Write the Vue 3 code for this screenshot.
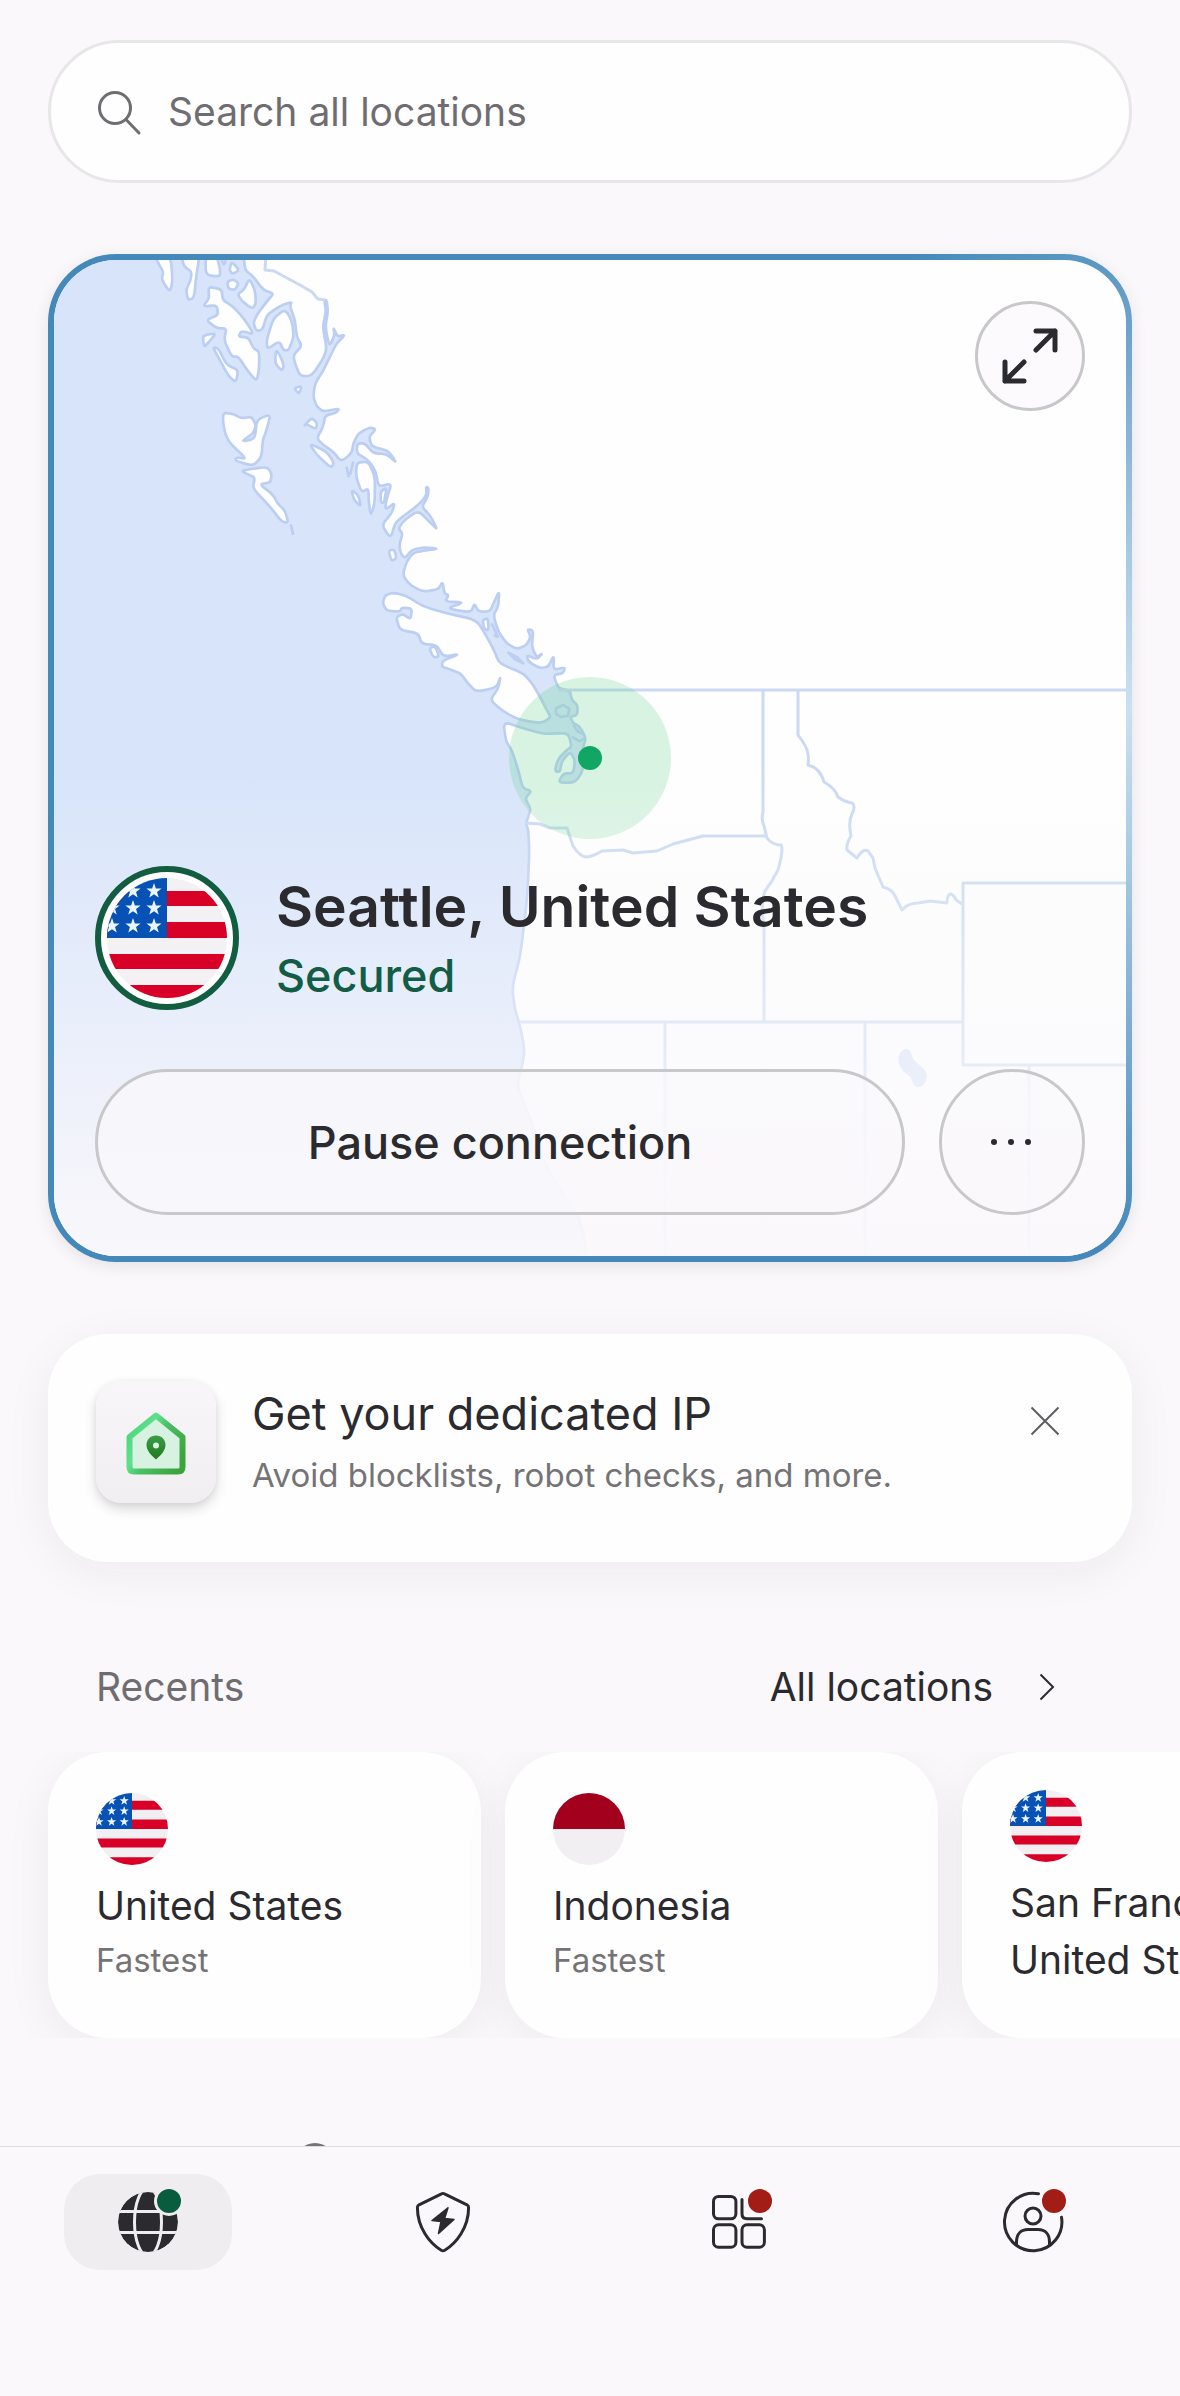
<template>
  <div class="screen">
    <main class="content">
      <label class="search">
        <svg class="search-icon" viewBox="0 0 48 48" aria-hidden="true">
          <circle cx="20" cy="20" r="15.5" />
          <path d="M31 31.5L44 45" />
        </svg>
        <input v-model="query" type="text" placeholder="Search all locations" aria-label="Search all locations" />
      </label>

      <section class="map-card">
        <div class="map-inner">
          <svg class="map" viewBox="54 260 1072 996" preserveAspectRatio="xMidYMid slice" aria-hidden="true">
            <defs>
              <linearGradient id="fade" x1="0" y1="0" x2="0" y2="1">
                <stop offset="0" stop-color="#faf8fb" stop-opacity="0" />
                <stop offset="0.5" stop-color="#faf8fb" stop-opacity="0.5" />
                <stop offset="0.8" stop-color="#faf8fb" stop-opacity="0.8" />
                <stop offset="1" stop-color="#faf8fb" stop-opacity="0.96" />
              </linearGradient>
            </defs>
            <rect x="54" y="260" width="1072" height="996" fill="#fefefe" />
            <g transform="translate(40 240) scale(0.33333)" stroke-width="8" stroke-linejoin="round">
              <path class="water" :d="coast" />
              <path v-for="(d, i) in islands" :key="i" class="land" :d="d" />
              <path class="water" d="M1405 1238L1432 1252L1450 1270L1425 1258Z" />
              <path class="water" d="M1548 1405l22 -10l18 12l-4 20l-22 4l-14 -10Z" />
              <path class="water" d="M1600 1455l12 18l20 10M1596 1490l22 14l14 -8" />
              <path class="water" d="M752 853l8 32M920 680l6 32M940 665l-10 40M1355 1150l18 40l-12 -4" />
            </g>
            <g class="borders">
              <path v-for="(d, i) in borders" :key="i" :d="d" />
            </g>
            <path class="lake" d="M899 1055C903 1046 911 1048 912 1056C914 1064 927 1067 927 1076C926 1084 920 1090 915 1086C911 1082 913 1078 908 1075C901 1070 897 1063 899 1055Z" />
            <circle cx="590" cy="758" r="81" fill="#5fcf8b" fill-opacity="0.24" />
            <circle cx="590" cy="758" r="12" fill="#12a665" />
            <rect x="54" y="770" width="1072" height="486" fill="url(#fade)" />
          </svg>

          <div class="overlay">
            <button class="round expand" type="button" aria-label="Expand map">
              <svg viewBox="0 0 110 110" aria-hidden="true">
                <path d="M61 49L80 30M61 30H80V49M49 61L30 80M30 61V80H49" />
              </svg>
            </button>

            <div class="status">
              <div class="location">
                <div class="flag-ring">
                  <svg viewBox="0 0 120 120" aria-hidden="true">
                    <clipPath id="clip-main"><circle cx="60" cy="60" r="60" /></clipPath>
                    <g clip-path="url(#clip-main)">
                      <rect width="120" height="120" fill="#f3f1f4" />
                      <path :d="stripes" fill="#d80027" />
                      <rect width="60" height="60" fill="#0752b4" />
                      <path v-for="(s, i) in stars" :key="i" :d="s" fill="#eaf6ff" />
                    </g>
                  </svg>
                </div>
                <div>
                  <h1>Seattle, United States</h1>
                  <p class="secured">Secured</p>
                </div>
              </div>
              <div class="actions">
                <button class="pause" type="button">Pause connection</button>
                <button class="round more" type="button" aria-label="More options">
                  <svg viewBox="0 0 146 146" aria-hidden="true">
                    <circle cx="55" cy="73" r="3" />
                    <circle cx="72" cy="73" r="3" />
                    <circle cx="89" cy="73" r="3" />
                  </svg>
                </button>
              </div>
            </div>
          </div>
        </div>
      </section>

      <section v-if="showPromo" class="promo">
        <div class="promo-icon">
          <svg viewBox="0 0 64 64" aria-hidden="true">
            <defs>
              <linearGradient id="house" x1="0" y1="0.2" x2="1" y2="0.8">
                <stop offset="0" stop-color="#4fd67f" />
                <stop offset="0.3" stop-color="#5fe08c" />
                <stop offset="0.5" stop-color="#4bbf68" />
                <stop offset="1" stop-color="#3ca43c" />
              </linearGradient>
              <linearGradient id="pin" x1="0" y1="0" x2="0" y2="1">
                <stop offset="0" stop-color="#3b9c49" />
                <stop offset="1" stop-color="#1f7a1c" />
              </linearGradient>
            </defs>
            <path d="M32 4.5L58.5 26V56Q58.5 60.5 54 60.5H10Q5.5 60.5 5.5 56V26Z" fill="#d8f2e2" stroke="url(#house)" stroke-width="6" stroke-linejoin="round" />
            <path d="M32 24.5C26.5 24.5 22.5 28.5 22.5 34C22.5 40 28 45 32 48.5C36 45 41.5 40 41.5 34C41.5 28.5 37.5 24.5 32 24.5ZM32 37.5A3 3 0 1 1 32 31.5A3 3 0 1 1 32 37.5Z" fill="url(#pin)" />
          </svg>
        </div>
        <div class="promo-text">
          <h2>Get your dedicated IP</h2>
          <p>Avoid blocklists, robot checks, and more.</p>
        </div>
        <button class="close" type="button" aria-label="Close" @click="showPromo = false">
          <svg viewBox="0 0 30 30" aria-hidden="true"><path d="M1.5 1.5L28.5 28.5M28.5 1.5L1.5 28.5" /></svg>
        </button>
      </section>

      <div class="recents-head">
        <h3>Recents</h3>
        <a href="#">
          All locations
          <svg viewBox="0 0 16 28" aria-hidden="true"><path d="M1.5 1.5L14 14L1.5 26.5" /></svg>
        </a>
      </div>

      <div class="recents">
        <button v-for="(item, i) in recents" :key="item.title" class="recent" type="button">
          <svg viewBox="0 0 120 120" aria-hidden="true">
            <clipPath :id="'clip-' + i"><circle cx="60" cy="60" r="60" /></clipPath>
            <g :clip-path="'url(#clip-' + i + ')'">
              <rect width="120" height="120" fill="#f1eff2" />
              <template v-if="item.flag === 'us'">
                <path :d="stripes" fill="#d80027" />
                <rect width="60" height="60" fill="#0752b4" />
                <path v-for="(s, n) in stars" :key="n" :d="s" fill="#eaf6ff" />
              </template>
              <rect v-else width="120" height="60" fill="#a2001d" />
            </g>
          </svg>
          <span class="recent-title">{{ item.title }}</span>
          <span :class="item.plain ? 'recent-title' : 'recent-sub'">{{ item.sub }}</span>
        </button>
      </div>

      <div class="next"></div>
    </main>

    <nav class="tabs">
      <a href="#" class="tab active" aria-label="VPN">
        <svg viewBox="0 0 72 72" aria-hidden="true">
          <clipPath id="clip-globe"><circle cx="36" cy="36" r="30" /></clipPath>
          <g clip-path="url(#clip-globe)">
            <circle cx="36" cy="36" r="30" fill="#2b2a2f" />
            <path d="M4 25.5H68M4 46.5H68" stroke="#efedf0" stroke-width="3" />
            <ellipse cx="36" cy="36" rx="13.5" ry="34" fill="none" stroke="#efedf0" stroke-width="3" />
          </g>
          <circle cx="57" cy="15" r="15" fill="#efedf0" />
          <circle cx="57" cy="15" r="12" fill="#0a5c3f" />
        </svg>
      </a>
      <a href="#" class="tab" aria-label="Threat protection">
        <svg viewBox="0 0 72 72" aria-hidden="true">
          <path class="line" d="M34.5 7.8Q36 7 37.5 7.8L60 18.8Q61.6 19.7 61.6 21.5C61.6 42 49 57.5 37.8 64.2Q36 65.2 34.2 64.2C23 57.5 10.4 42 10.4 21.5Q10.4 19.7 12 18.8Z" />
          <path d="M41 21.8L37.6 32.6L47 33.4L31.5 47.4L34 35.6L25 34.6Z" fill="#2b2a2f" stroke="#2b2a2f" stroke-width="1.5" stroke-linejoin="round" />
        </svg>
      </a>
      <a href="#" class="tab" aria-label="Products">
        <svg viewBox="0 0 72 72" aria-hidden="true">
          <rect class="line" x="11.5" y="10.4" width="22.4" height="22.4" rx="5" />
          <rect class="line" x="11.5" y="38.8" width="22.4" height="22.4" rx="5" />
          <rect class="line" x="40" y="38.8" width="22.4" height="22.4" rx="5" />
          <path class="line" d="M40 13.5V27.8Q40 32.8 45 32.8H59.5" />
          <circle cx="58" cy="15" r="12" fill="#a11d16" />
        </svg>
      </a>
      <a href="#" class="tab" aria-label="Profile">
        <svg viewBox="0 0 72 72" aria-hidden="true">
          <path class="line" d="M41.5 7.8A28.7 28.7 0 1 0 64.5 31.3" />
          <circle class="line" cx="36" cy="30" r="8" />
          <path class="line" d="M19.5 58V56C19.5 48 24 43.5 31 43.5H41C48 43.5 52.5 48 52.5 56V58" />
          <circle cx="57" cy="15" r="12" fill="#a11d16" />
        </svg>
      </a>
    </nav>
  </div>
</template>

<script setup>
import { ref } from "vue";

const query = ref("");
const showPromo = ref(true);

const recents = [
  { flag: "us", title: "United States", sub: "Fastest" },
  { flag: "id", title: "Indonesia", sub: "Fastest" },
  { flag: "us", title: "San Francisco,", sub: "United States", plain: true },
];

const stripes = "M0 13H120V28H0ZM0 44H120V60H0ZM0 76H120V91H0ZM0 107H120V120H0Z";

const star = (cx, cy, r) => {
  const points = [];
  for (let i = 0; i < 10; i++) {
    const radius = i % 2 ? r * 0.4 : r;
    const angle = (Math.PI / 5) * i - Math.PI / 2;
    points.push(`${(cx + radius * Math.cos(angle)).toFixed(2)} ${(cy + radius * Math.sin(angle)).toFixed(2)}`);
  }
  return `M${points.join("L")}Z`;
};

const stars = [];
for (const y of [13, 30, 48]) {
  for (const x of [5, 26, 47]) {
    stars.push(star(x, y, 8));
  }
}

// closed outline with softened corners
const smooth = (text) => {
  const pts = text.split(" ").map((p) => p.split(",").map(Number));
  const mid = (a, b) => [(a[0] + b[0]) / 2, (a[1] + b[1]) / 2];
  const near = (a, b) => [a[0] * 0.65 + b[0] * 0.35, a[1] * 0.65 + b[1] * 0.35];
  const start = mid(pts[pts.length - 1], pts[0]);
  let d = `M${start.join(" ")}`;
  pts.forEach((p, i) => {
    const prev = pts[(i + pts.length - 1) % pts.length];
    const next = pts[(i + 1) % pts.length];
    d += `L${near(p, prev).join(" ")}Q${p.join(" ")} ${near(p, next).join(" ")}`;
  });
  return d + "Z";
};

const coast = smooth(
  "-200,-200 0,0 400,20 600,20 612,50 615,90 640,110 670,150 702,160 680,185 650,225 640,250 650,274 668,268 680,225 720,198 755,185 750,200 765,240 770,290 786,318 760,345 765,370 780,408 815,408 850,355 860,325 848,260 858,215 853,180 860,180 864,215 856,260 868,320 884,285 880,262 892,290 916,284 890,310 870,350 848,395 825,430 820,470 830,500 850,515 898,505 890,518 855,527 850,560 830,595 850,615 880,635 903,665 935,640 940,610 955,580 990,562 1008,568 987,590 995,620 1045,632 1071,670 1040,642 1000,640 975,610 952,610 950,640 985,660 1008,695 1015,740 1055,730 1040,775 1035,810 1065,788 1055,820 1025,855 1052,895 1065,850 1085,832 1135,795 1160,765 1158,740 1166,745 1164,770 1145,800 1170,825 1193,870 1168,845 1135,812 1095,838 1075,865 1088,880 1078,915 1082,940 1095,955 1115,930 1150,922 1197,926 1150,932 1120,938 1100,965 1088,1005 1110,1035 1150,1055 1195,1048 1208,1025 1213,1060 1226,1065 1215,1085 1273,1087 1220,1105 1293,1118 1303,1090 1315,1115 1350,1115 1365,1080 1378,1053 1375,1100 1360,1125 1375,1175 1400,1210 1430,1228 1460,1215 1472,1190 1462,1167 1480,1172 1475,1220 1490,1252 1508,1240 1490,1258 1460,1245 1465,1265 1500,1285 1525,1280 1542,1245 1540,1290 1575,1282 1570,1300 1540,1305 1555,1345 1590,1352 1595,1380 1613,1395 1612,1425 1590,1430 1600,1450 1620,1460 1638,1495 1628,1525 1630,1590 1605,1628 1555,1628 1570,1600 1600,1600 1605,1560 1590,1535 1565,1565 1560,1595 1545,1595 1552,1560 1580,1530 1595,1520 1585,1480 1540,1480 1510,1482 1450,1465 1390,1445 1398,1505 1415,1530 1435,1590 1448,1645 1475,1653 1455,1675 1472,1705 1465,1730 1458,1750 1465,1770 1468,1840 1462,1970 1441,2150 1416,2240 1425,2310 1441,2360 1454,2430 1446,2480 1430,2540 1473,2640 1500,2740 1553,2840 1629,2950 1650,3150 0,3150 -200,3400"
);

const islands = [
  "345,50 358,75 370,95 365,120 390,157 398,120 392,50",
  "425,50 432,80 455,95 452,120 438,150 444,180 462,174 470,100 478,50",
  "497,50 497,105 540,110 540,85 530,50",
  "542,50 552,78 560,50",
  "575,65 568,90 578,102 598,90",
  "562,125 580,118 596,130 585,150 565,146",
  "628,115 612,150 593,162 605,182 637,207 648,190 645,150",
  "505,140 545,148 548,180 580,200 615,240 642,284 605,272 595,290 625,292 640,325 658,335 657,390 650,424 625,395 595,350 575,350 552,300 560,265 530,265 498,240 535,225 530,195 488,200 508,175",
  "488,286 528,280 510,302 492,322",
  "518,322 535,325 560,375 595,390 588,427 565,408 540,360",
  "735,208 755,240 762,290 745,332 730,330 718,303 682,328 680,300 700,235",
  "708,328 722,350 732,378 725,392 705,370",
  "762,445 785,438 778,462",
  "550,518 580,522 605,535 635,530 648,555 640,580 603,605 645,597 650,540 692,522 680,570 668,600 665,650 640,678 585,662 590,652 620,657 570,610 555,580 549,545",
  "603,692 680,680 695,700 692,728 658,732 700,765 712,790 735,812 745,848 725,845 690,800 638,745 645,712 622,702",
  "792,558 815,533 832,550 827,568 800,552",
  "808,610 860,635 882,668 874,684 830,645",
  "950,668 985,665 1005,710 1004,790 992,828 986,780 985,745 965,757 948,710",
  "934,750 955,765 963,800 942,780",
  "1022,755 1040,742 1032,790 1022,787",
  "1046,932 1062,928 1070,955 1054,963",
  "1028,1090 1035,1066 1060,1058 1100,1068 1150,1100 1220,1120 1310,1140 1340,1190 1362,1230 1375,1265 1400,1280 1450,1300 1480,1335 1505,1380 1520,1410 1533,1432 1505,1450 1440,1440 1390,1415 1350,1380 1375,1345 1382,1308 1370,1342 1308,1356 1280,1325 1262,1300 1235,1290 1205,1280 1208,1262 1260,1242 1210,1250 1190,1215 1145,1212 1135,1180 1080,1170 1068,1132 1088,1122 1112,1138 1116,1105 1085,1103 1080,1115 1040,1112",
  "1168,1225 1185,1218 1198,1250 1180,1252",
  "1328,1140 1344,1134 1346,1172 1332,1166",
].map(smooth);

const borders = [
  "M558 690H1130",
  "M266 255L265 270L274 271L300 285L312 292L318 299L325 300",
  "M763 690V812Q761 820 764 826L767 838Q772 845 781 845Q784 849 778 870Q772 882 765 891Q760 905 764 925V1022",
  "M798 690V735L803 742Q810 752 808 765Q820 768 824 782Q835 788 838 797Q845 802 852 803Q856 806 852 814Q848 822 851 836Q846 844 847 850L857 858Q863 848 868 851L873 858L875 868L883 887Q892 889 895 896L902 910Q908 903 918 903L930 901L947 903Q947 894 951 894Q955 896 956 900L962 904",
  "M1130 883H963V1065H1130",
  "M520 1022H963M865 1022V1256M1029 1065V1256M665 1022V1256",
  "M526 823L540 824L550 828H567L573 846Q580 857 587 857Q594 856 602 851L623 850L633 853L657 851L673 844L703 836H766",
];
</script>

<style>
body {
  background: #faf8fb;
}
</style>

<style scoped>
.screen {
  display: flex;
  flex-direction: column;
  height: 100vh;
  overflow: hidden;
  background: #faf8fb;
  color: #2b2a2f;
  font-family: Inter, "Liberation Sans", sans-serif;
}

.screen * {
  box-sizing: border-box;
}

h1,
h2,
h3,
p {
  margin: 0;
}

button {
  margin: 0;
  padding: 0;
  border: none;
  background: none;
  color: inherit;
  font: inherit;
  cursor: pointer;
}

.content {
  flex: 1;
  min-height: 0;
  padding-top: 40px;
  overflow: hidden;
}

.search {
  display: flex;
  align-items: center;
  gap: 25px;
  height: 143px;
  margin: 0 48px;
  padding: 0 44px;
  border: 3px solid #e8e6e9;
  border-radius: 72px;
  background: #fefefe;
}

.search-icon {
  flex: none;
  width: 48px;
  height: 48px;
  fill: none;
  stroke: #6f6d71;
  stroke-width: 3;
  stroke-linecap: round;
}

.search input {
  flex: 1;
  min-width: 0;
  padding: 0;
  border: none;
  outline: none;
  background: transparent;
  color: #2b2a2f;
  font: inherit;
  font-size: 39px;
}

.search input::placeholder {
  color: #6f6d71;
  opacity: 1;
}

.map-card {
  display: flex;
  min-height: 1008px;
  margin: 71px 48px 0;
  padding: 6px;
  border-radius: 68px;
  background: radial-gradient(ellipse 400px 540px at 100% 45%, #cbe0f0 0%, #a8cbe2 27%, #78aacf 62%, #4489b9 100%);
  box-shadow: 0 4px 16px rgba(40, 40, 40, 0.1);
}

.map-inner {
  position: relative;
  display: flex;
  flex: 1;
  overflow: hidden;
  border-radius: 62px;
}

.map {
  position: absolute;
  inset: 0;
  width: 100%;
  height: 100%;
}

.water {
  fill: #d7e4fa;
  stroke: #bccff2;
}

.land {
  fill: #fefefe;
  stroke: #bccff2;
}

.borders {
  fill: none;
  stroke: #cbd9f3;
  stroke-width: 3;
  stroke-linejoin: round;
}

.lake {
  fill: #cfdff8;
}

.overlay {
  position: relative;
  display: flex;
  flex: 1;
  flex-direction: column;
  justify-content: space-between;
  padding: 41px;
}

.round {
  flex: none;
  border: 3px solid #c8c7ca;
  border-radius: 50%;
}

.round svg {
  display: block;
  margin: -3px;
}

.expand {
  align-self: flex-end;
  width: 110px;
  height: 110px;
  background: #fcfafd;
}

.expand svg {
  width: 110px;
  height: 110px;
  fill: none;
  stroke: #2b2a2f;
  stroke-width: 5;
  stroke-linecap: round;
  stroke-linejoin: round;
}

.status {
  display: flex;
  flex-direction: column;
  gap: 59px;
}

.location {
  display: flex;
  align-items: center;
  gap: 37px;
}

.flag-ring {
  flex: none;
  width: 144px;
  height: 144px;
  padding: 6px;
  border: 6px solid #125d40;
  border-radius: 50%;
  background: #fff;
}

.flag-ring svg {
  display: block;
}

h1 {
  font-size: 57px;
  font-weight: 600;
  line-height: 68px;
}

.secured {
  margin-top: 8px;
  color: #125d45;
  font-size: 45px;
  font-weight: 500;
  line-height: 54px;
}

.actions {
  display: flex;
  gap: 34px;
}

.pause {
  flex: 1;
  height: 146px;
  border: 3px solid #c8c7ca;
  border-radius: 73px;
  background: rgba(250, 248, 251, 0.7);
  font-size: 45px;
  font-weight: 500;
}

.more {
  width: 146px;
  height: 146px;
  background: rgba(250, 248, 251, 0.7);
}

.more svg {
  width: 146px;
  height: 146px;
  fill: #2b2a2f;
}

.promo {
  display: flex;
  align-items: flex-start;
  height: 228px;
  margin: 72px 48px 0;
  padding: 47px 72px 0 48px;
  border-radius: 60px;
  background: #fefefe;
  box-shadow: 0 10px 48px rgba(40, 40, 40, 0.06);
}

.promo-icon {
  display: flex;
  flex: none;
  align-items: center;
  justify-content: center;
  width: 120px;
  height: 122px;
  padding-top: 2px;
  border-radius: 26px;
  background: linear-gradient(#f8f6f9, #f0eef1);
  box-shadow: 0 6px 12px rgba(40, 40, 40, 0.18), 0 0 6px rgba(40, 40, 40, 0.05);
}

.promo-icon svg {
  width: 64px;
  height: 64px;
}

.promo-text {
  flex: 1;
  padding: 6px 0 0 36px;
}

.promo h2 {
  font-size: 45px;
  font-weight: 400;
  line-height: 54px;
}

.promo p {
  margin-top: 14px;
  color: #757376;
  font-size: 33px;
  line-height: 40px;
}

.close {
  width: 30px;
  height: 30px;
  margin-top: 25px;
}

.close svg {
  display: block;
  fill: none;
  stroke: #5f5d62;
  stroke-width: 2;
}

.recents-head {
  display: flex;
  align-items: center;
  justify-content: space-between;
  margin: 97px 48px 37px;
  padding: 0 77px 0 48px;
  font-size: 39px;
  line-height: 56px;
}

.recents-head h3 {
  color: #6f6d71;
  font-size: inherit;
  font-weight: 400;
}

.recents-head a {
  display: flex;
  align-items: center;
  gap: 46px;
  color: inherit;
  text-decoration: none;
}

.recents-head svg {
  width: 16px;
  height: 28px;
  fill: none;
  stroke: #2b2a2f;
  stroke-width: 2;
}

.recents {
  display: flex;
  gap: 24px;
  padding: 0 48px;
  overflow: hidden;
}

.recent {
  display: flex;
  flex: none;
  flex-direction: column;
  align-items: flex-start;
  justify-content: center;
  width: 433px;
  height: 286px;
  padding: 0 48px 12px;
  border-radius: 60px;
  background: #fefefe;
  box-shadow: 0 10px 48px rgba(40, 40, 40, 0.06);
  text-align: left;
}

.recent svg {
  width: 72px;
  height: 72px;
  margin-bottom: 12px;
}

.recent-title {
  font-size: 39px;
  line-height: 57px;
}

.recent-sub {
  color: #757376;
  font-size: 33px;
  line-height: 52px;
}

/* next row starts right above the tab bar */
.next {
  width: 40px;
  height: 40px;
  margin: 105px 0 0 295px;
  border-radius: 50%;
  background: #757376;
}

.tabs {
  display: flex;
  flex: none;
  height: 250px;
  padding-top: 27px;
  border-top: 1px solid #dedce0;
}

.tab {
  display: flex;
  flex: 1;
  align-items: center;
  justify-content: center;
  height: 96px;
}

.tab svg {
  width: 72px;
  height: 72px;
}

.active {
  flex: 0 0 168px;
  margin: 0 calc((25% - 168px) / 2);
  border-radius: 36px;
  background: #efedf0;
}

.line {
  fill: none;
  stroke: #2b2a2f;
  stroke-width: 3;
  stroke-linecap: round;
  stroke-linejoin: round;
}
</style>
